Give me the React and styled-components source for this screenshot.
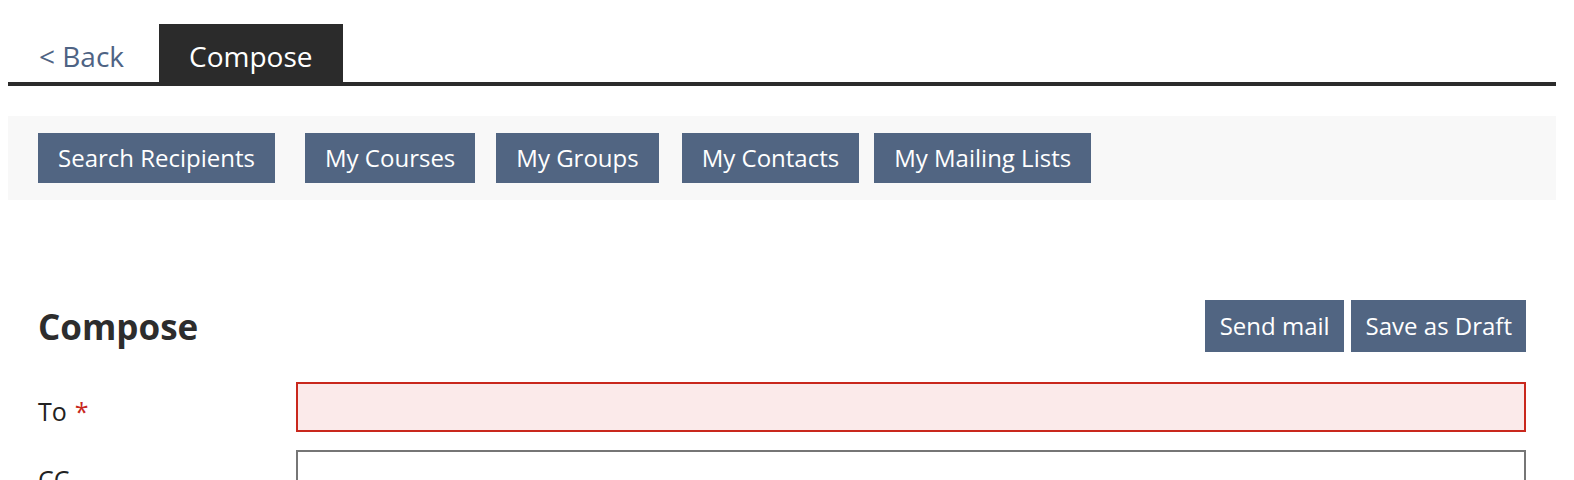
import React from "react";
import styled, { createGlobalStyle } from "styled-components";

const Global = createGlobalStyle`
  html, body { background: #ffffff; }
  body {
    margin: 8px;
    font-family: "Open Sans", "Noto Sans", Arial, sans-serif;
    color: #2b2b2b;
  }
  * { box-sizing: border-box; }
`;

const Page = styled.div`
  width: 1548px;
`;

const TabBar = styled.nav`
  display: flex;
  align-items: flex-end;
  margin-top: 16px;
  border-bottom: 4px solid #2b2b2b;
  padding-left: 30px;
`;

const BackLink = styled.a`
  font-size: 28px;
  line-height: 42px;
  padding: 11px 0 5px 1px;
  color: #4e6384;
  text-decoration: none;
  width: 121px;
`;

const Tab = styled.div`
  font-size: 28px;
  line-height: 42px;
  padding: 11px 31px 5px 30px;
  background: ${(p) => (p.$active ? "#2b2b2b" : "transparent")};
  color: ${(p) => (p.$active ? "#ffffff" : "#4e6384")};
`;

const Toolbar = styled.div`
  display: flex;
  align-items: center;
  margin-top: 30px;
  background: #f8f8f8;
  padding: 17px 30px;
`;

const Button = styled.button`
  font-family: "Open Sans", "Noto Sans", Arial, sans-serif;
  font-size: 24px;
  line-height: ${(p) => (p.$compact ? "52px" : "50px")};
  height: ${(p) => (p.$compact ? "52px" : "50px")};
  padding: ${(p) => (p.$compact ? "0 14px 0 15px" : "0 20px")};
  margin-left: ${(p) => p.$gap || 0}px;
  background: #516582;
  color: #ffffff;
  border: none;
  border-radius: 0;
  white-space: nowrap;
  cursor: pointer;
`;

const Main = styled.main`
  padding: 100px 30px 0;
`;

const HeaderRow = styled.div`
  display: flex;
  align-items: center;
  justify-content: space-between;
  margin-bottom: 30px;
`;

const Title = styled.h1`
  margin: 0;
  font-size: 35px;
  line-height: 43px;
  font-weight: 700;
  color: #2d2d2d;
`;

const Actions = styled.div`
  display: flex;
  gap: 7px;
`;

const Form = styled.div`
  display: grid;
  grid-template-columns: 258px 1fr;
  row-gap: 18px;
`;

const Label = styled.label`
  font-size: 25px;
  line-height: 38px;
  padding-top: 10px;
  color: #222222;
`;

const Required = styled.span`
  color: #c8281e;
  margin-left: 8px;
`;

const Input = styled.input`
  display: block;
  width: 100%;
  height: 50px;
  font-family: "Open Sans", "Noto Sans", Arial, sans-serif;
  font-size: 24px;
  padding: 0 12px;
  border: 2px solid ${(p) => (p.$error ? "#c9281d" : "#767676")};
  background: ${(p) => (p.$error ? "#fbeaea" : "#ffffff")};
  border-radius: 0;
  outline: none;
`;

const toolbarButtons = [
  { label: "Search Recipients", gap: 0 },
  { label: "My Courses", gap: 30 },
  { label: "My Groups", gap: 21 },
  { label: "My Contacts", gap: 23 },
  { label: "My Mailing Lists", gap: 15 },
];

export default function App() {
  return (
    <Page>
      <Global />
      <TabBar>
        <BackLink href="#">&lt; Back</BackLink>
        <Tab $active>Compose</Tab>
      </TabBar>
      <Toolbar>
        {toolbarButtons.map((b) => (
          <Button key={b.label} $gap={b.gap}>
            {b.label}
          </Button>
        ))}
      </Toolbar>
      <Main>
        <HeaderRow>
          <Title>Compose</Title>
          <Actions>
            <Button $compact>Send mail</Button>
            <Button $compact>Save as Draft</Button>
          </Actions>
        </HeaderRow>
        <Form>
          <Label>
            To<Required>*</Required>
          </Label>
          <Input $error />
          <Label>CC</Label>
          <Input />
        </Form>
      </Main>
    </Page>
  );
}
